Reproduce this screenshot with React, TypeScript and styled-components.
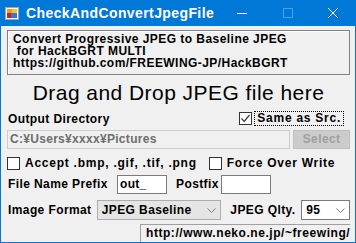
import React from "react";
import styled, { createGlobalStyle } from "styled-components";

const Global = createGlobalStyle`
  html, body { margin: 0; padding: 0; background: #f0f0f0; }
  * { box-sizing: border-box; }
`;

const UI = `"Liberation Sans", Arial, sans-serif`;

const Window = styled.div`
  width: 356px;
  height: 243px;
  display: flex;
  flex-direction: column;
  border: 1px solid #0078d7;
  border-top: none;
  background: #f0f0f0;
  font-family: ${UI};
  font-weight: bold;
  font-size: 12px;
  color: #000;
  overflow: hidden;
`;

const TitleBar = styled.div`
  height: 26px;
  flex: none;
  background: #0078d7;
  display: flex;
  align-items: center;
  padding-left: 4px;
  color: #fff;
`;

const Title = styled.div`
  margin-left: 7px;
  font-size: 14px;
  font-weight: bold;
  letter-spacing: 0.4px;
  flex: 1;
`;

const TitleButton = styled.div<{ $w: number }>`
  width: ${(p) => p.$w}px;
  height: 26px;
  display: flex;
  align-items: center;
  justify-content: center;
`;

const Body = styled.div`
  flex: 1;
  display: flex;
  flex-direction: column;
  padding: 4px 5px 0 6px;
`;

const InfoBox = styled.div`
  height: 45px;
  border: 1px solid #828282;
  box-shadow: inset 1px 1px 0 #fff;
  padding: 2px 0 0 5px;
  line-height: 12px;
  white-space: pre;
  letter-spacing: 0.45px;
`;

const DropText = styled.div`
  font-weight: normal;
  font-size: 21px;
  text-align: center;
  margin-top: 6px;
  height: 29px;
  line-height: 24px;
  letter-spacing: 0.45px;
`;

const Row = styled.div<{ $h: number; $mt?: number }>`
  display: flex;
  align-items: center;
  height: ${(p) => p.$h}px;
  margin-top: ${(p) => p.$mt ?? 0}px;
`;

const Label = styled.span<{ $ml?: number; $w?: number }>`
  margin-left: ${(p) => p.$ml ?? 0}px;
  ${(p) => (p.$w ? `width: ${p.$w}px;` : "")}
  white-space: nowrap;
  letter-spacing: 0.4px;
`;

const Spacer = styled.div<{ $w?: number }>`
  flex: ${(p) => (p.$w ? `0 0 ${p.$w}px` : "1")};
`;

const CheckWrap = styled.div<{ $ml?: number }>`
  display: flex;
  align-items: center;
  margin-left: ${(p) => p.$ml ?? 0}px;
`;

const Box = styled.div`
  width: 13px;
  height: 13px;
  border: 1px solid #333;
  background: #fff;
  display: flex;
  align-items: center;
  justify-content: center;
`;

const CheckText = styled.span<{ $focus?: boolean }>`
  margin-left: 2px;
  padding: 0 2px;
  line-height: 13px;
  border: 1px dotted ${(p) => (p.$focus ? "#000" : "transparent")};
  white-space: nowrap;
  letter-spacing: 0.75px;
`;

const TextInput = styled.div<{ $w: number; $disabled?: boolean }>`
  width: ${(p) => p.$w}px;
  height: 19px;
  border: 1px solid ${(p) => (p.$disabled ? "#cccccc" : "#7a7a7a")};
  background: ${(p) => (p.$disabled ? "#f0f0f0" : "#fff")};
  color: ${(p) => (p.$disabled ? "#6d6d6d" : "#000")};
  padding-left: 2px;
  line-height: 17px;
  white-space: nowrap;
  overflow: hidden;
  letter-spacing: 0.3px;
`;

const Button = styled.div`
  width: 57px;
  height: 19px;
  margin-left: 3px;
  background: #cccccc;
  border: 1px solid #bfbfbf;
  color: #a0a0a0;
  display: flex;
  align-items: center;
  justify-content: center;
  letter-spacing: 0.4px;
`;

const Combo = styled.div<{ $w: number; $white?: boolean }>`
  width: ${(p) => p.$w}px;
  height: 20px;
  background: ${(p) => (p.$white ? "#fff" : "#e5e5e5")};
  border: 1px solid ${(p) => (p.$white ? "#7a7a7a" : "#acacac")};
  display: flex;
  align-items: center;
  padding-left: 4px;
`;

const ComboText = styled.span`
  flex: 1;
  white-space: nowrap;
  letter-spacing: 0.4px;
`;

const Chevron = styled.div`
  width: 17px;
  display: flex;
  align-items: center;
  justify-content: center;
`;

const Status = styled.div`
  margin-top: auto;
  display: flex;
  justify-content: flex-end;
  height: 18px;
`;

const StatusLabel = styled.div`
  width: 210px;
  border-top: 1px solid #a0a0a0;
  border-left: 1px solid #a0a0a0;
  padding-left: 5px;
  line-height: 17px;
  white-space: nowrap;
  letter-spacing: 0.55px;
`;

const AppIcon = () => (
  <svg width="14" height="13" viewBox="0 0 14 13">
    <rect x="0.5" y="0.5" width="13" height="12" fill="#f4f4f4" stroke="#9aa8b8" />
    <rect x="2" y="2" width="5" height="4" fill="#e8a020" />
    <rect x="7" y="2" width="5" height="4" fill="#f0c040" />
    <rect x="2" y="6" width="4" height="5" fill="#d02020" />
    <rect x="6" y="6" width="6" height="5" fill="#3a78d0" />
  </svg>
);

const Check = ({ checked }: { checked?: boolean }) => (
  <Box>
    {checked && (
      <svg width="11" height="11" viewBox="0 0 11 11">
        <path d="M1.5 5.5 L4.2 8.3 L9.5 2" fill="none" stroke="#333" strokeWidth="1.2" />
      </svg>
    )}
  </Box>
);

const ChevronIcon = () => (
  <svg width="9" height="5" viewBox="0 0 9 5">
    <path d="M0.5 0.5 L4.5 4.5 L8.5 0.5" fill="none" stroke="#7a7a7a" strokeWidth="1" />
  </svg>
);

export default function App() {
  return (
    <>
      <Global />
      <Window>
        <TitleBar>
          <AppIcon />
          <Title>CheckAndConvertJpegFile</Title>
          <TitleButton $w={46}>
            <svg width="10" height="1" viewBox="0 0 10 1">
              <rect width="10" height="1" fill="#fff" />
            </svg>
          </TitleButton>
          <TitleButton $w={46}>
            <svg width="10" height="10" viewBox="0 0 10 10">
              <rect x="0.5" y="0.5" width="9" height="9" fill="none" stroke="#4aa0e6" />
            </svg>
          </TitleButton>
          <TitleButton $w={44}>
            <svg width="10" height="10" viewBox="0 0 10 10">
              <path d="M0 0 L10 10 M10 0 L0 10" stroke="#fff" strokeWidth="1" />
            </svg>
          </TitleButton>
        </TitleBar>
        <Body>
          <InfoBox>
            {"Convert Progressive JPEG to Baseline JPEG\n for HackBGRT MULTI\nhttps://github.com/FREEWING-JP/HackBGRT"}
          </InfoBox>
          <DropText>Drag and Drop JPEG file here</DropText>
          <Row $h={17}>
            <Label $ml={1}>Output Directory</Label>
            <Spacer />
            <CheckWrap>
              <Check checked />
              <CheckText $focus>Same as Src.</CheckText>
            </CheckWrap>
            <Spacer $w={6} />
          </Row>
          <Row $h={20} $mt={2}>
            <TextInput $w={284} $disabled>
              C:¥Users¥xxxx¥Pictures
            </TextInput>
            <Button>Select</Button>
          </Row>
          <Row $h={14} $mt={7}>
            <CheckWrap $ml={0}>
              <Check />
              <CheckText>Accept .bmp, .gif, .tif, .png</CheckText>
            </CheckWrap>
            <CheckWrap $ml={9}>
              <Check />
              <CheckText>Force Over Write</CheckText>
            </CheckWrap>
          </Row>
          <Row $h={20} $mt={4}>
            <Label $ml={1} $w={109}>File Name Prefix</Label>
            <TextInput $w={50}>out_</TextInput>
            <Label $ml={9} $w={45}>Postfix</Label>
            <TextInput $w={50} />
          </Row>
          <Row $h={20} $mt={6}>
            <Label $ml={1} $w={89}>Image Format</Label>
            <Combo $w={125}>
              <ComboText>JPEG Baseline</ComboText>
              <Chevron>
                <ChevronIcon />
              </Chevron>
            </Combo>
            <Label $ml={9} $w={71}>JPEG Qlty.</Label>
            <Combo $w={49} $white>
              <ComboText>95</ComboText>
              <Chevron>
                <ChevronIcon />
              </Chevron>
            </Combo>
          </Row>
          <Status>
            <StatusLabel>http://www.neko.ne.jp/~freewing/</StatusLabel>
          </Status>
        </Body>
      </Window>
    </>
  );
}
